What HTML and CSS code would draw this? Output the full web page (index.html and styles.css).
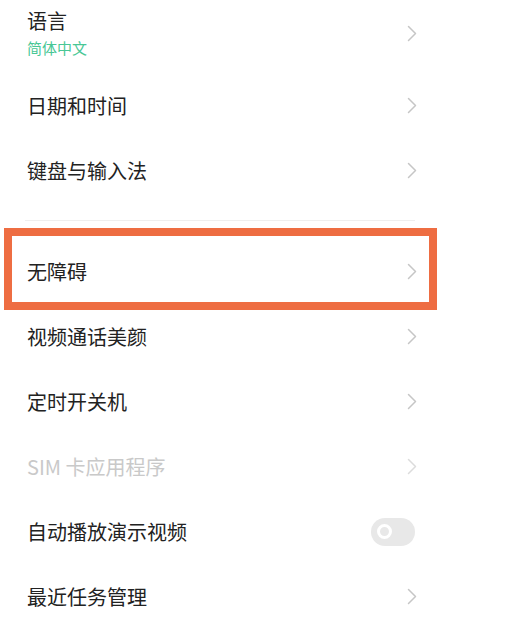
FILE: index.html
```html
<!DOCTYPE html>
<html lang="zh-CN">
<head>
<meta charset="utf-8">
<title>设置</title>
<link rel="stylesheet" href="styles.css">
</head>
<body>
<div class="list">
  <div class="row row-tall">
    <div class="texts">
      <div class="title">语言</div>
      <div class="sub">简体中文</div>
    </div>
    <svg class="chev" viewBox="0 0 10 17" width="10" height="17"><path d="M1.5 1.5 L8.5 8.5 L1.5 15.5" fill="none" stroke="#c6c6c6" stroke-width="1.5" stroke-linecap="round" stroke-linejoin="round"/></svg>
  </div>
  <div class="row">
    <div class="title">日期和时间</div>
    <svg class="chev" viewBox="0 0 10 17" width="10" height="17"><path d="M1.5 1.5 L8.5 8.5 L1.5 15.5" fill="none" stroke="#c6c6c6" stroke-width="1.5" stroke-linecap="round" stroke-linejoin="round"/></svg>
  </div>
  <div class="row">
    <div class="title">键盘与输入法</div>
    <svg class="chev" viewBox="0 0 10 17" width="10" height="17"><path d="M1.5 1.5 L8.5 8.5 L1.5 15.5" fill="none" stroke="#c6c6c6" stroke-width="1.5" stroke-linecap="round" stroke-linejoin="round"/></svg>
  </div>
  <div class="divider"></div>
  <div class="row highlighted">
    <div class="title">无障碍</div>
    <svg class="chev" viewBox="0 0 10 17" width="10" height="17"><path d="M1.5 1.5 L8.5 8.5 L1.5 15.5" fill="none" stroke="#c6c6c6" stroke-width="1.5" stroke-linecap="round" stroke-linejoin="round"/></svg>
  </div>
  <div class="row">
    <div class="title">视频通话美颜</div>
    <svg class="chev" viewBox="0 0 10 17" width="10" height="17"><path d="M1.5 1.5 L8.5 8.5 L1.5 15.5" fill="none" stroke="#c6c6c6" stroke-width="1.5" stroke-linecap="round" stroke-linejoin="round"/></svg>
  </div>
  <div class="row">
    <div class="title">定时开关机</div>
    <svg class="chev" viewBox="0 0 10 17" width="10" height="17"><path d="M1.5 1.5 L8.5 8.5 L1.5 15.5" fill="none" stroke="#c6c6c6" stroke-width="1.5" stroke-linecap="round" stroke-linejoin="round"/></svg>
  </div>
  <div class="row disabled">
    <div class="title">SIM 卡应用程序</div>
    <svg class="chev" viewBox="0 0 10 17" width="10" height="17"><path d="M1.5 1.5 L8.5 8.5 L1.5 15.5" fill="none" stroke="#dcdcdc" stroke-width="1.5" stroke-linecap="round" stroke-linejoin="round"/></svg>
  </div>
  <div class="row">
    <div class="title">自动播放演示视频</div>
    <span class="toggle"><span class="knob"></span></span>
  </div>
  <div class="row">
    <div class="title">最近任务管理</div>
    <svg class="chev" viewBox="0 0 10 17" width="10" height="17"><path d="M1.5 1.5 L8.5 8.5 L1.5 15.5" fill="none" stroke="#c6c6c6" stroke-width="1.5" stroke-linecap="round" stroke-linejoin="round"/></svg>
  </div>
</div>
</body>
</html>
```
FILE: styles.css
```css
html, body {
  margin: 0;
  padding: 0;
  background: #ffffff;
}
body {
  font-family: "Noto Sans CJK SC", "Noto Sans", sans-serif;
  color: #222222;
  width: 506px;
  height: 635px;
  overflow: hidden;
}
.list {
  display: flex;
  flex-direction: column;
}
.row {
  display: flex;
  align-items: center;
  justify-content: space-between;
  height: 65px;
  padding: 0 89px 0 27px;
  box-sizing: border-box;
}
.row-tall {
  height: 73px;
  padding-top: 8px;
  padding-bottom: 15px;
}
.texts {
  display: flex;
  flex-direction: column;
  gap: 4px;
}
.title {
  font-size: 20px;
  line-height: 26px;
}
.sub {
  font-size: 15px;
  line-height: 20px;
  color: #48c795;
}
.chev {
  display: block;
  flex: none;
}
.divider {
  height: 1px;
  width: 390px;
  background: #efefef;
  margin: 17px 0 18px 25px;
}
.highlighted {
  position: relative;
}
.highlighted::after {
  content: "";
  position: absolute;
  top: -11px;
  bottom: -6px;
  left: 4px;
  right: 69px;
  border: 8px solid #ee6d42;
  pointer-events: none;
}
.highlighted .title {
  margin-top: 1px;
}
.disabled .title {
  color: #c9c9c9;
}
.toggle {
  display: flex;
  align-items: center;
  width: 44px;
  height: 28px;
  border-radius: 14px;
  background: #e8e8e8;
  margin-right: 2px;
  flex: none;
}
.knob {
  width: 15px;
  height: 15px;
  box-sizing: border-box;
  border: 3px solid #ffffff;
  border-radius: 50%;
  margin-left: 6px;
}
```
